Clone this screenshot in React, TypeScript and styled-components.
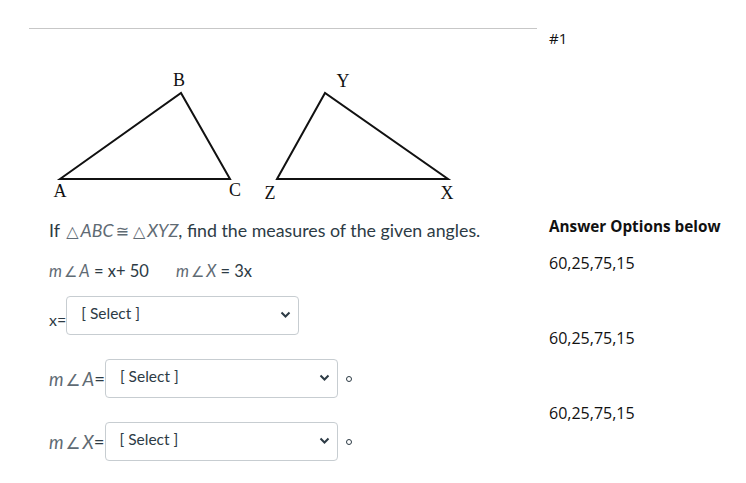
import styled, { createGlobalStyle } from "styled-components";

const Global = createGlobalStyle`
  html, body { margin: 0; padding: 0; background: #fff; }
  body { font-family: Lato, "Noto Sans", sans-serif; color: #2d3b45; }
`;

const Page = styled.div`
  display: flex;
  width: 746px;
  height: 483px;
  overflow: hidden;
`;

const Main = styled.div`
  width: 508px;
  margin-left: 29px;
  padding-top: 28px;
  display: flex;
  flex-direction: column;
`;

const Rule = styled.div`
  height: 0;
  border-top: 1px solid #c7c7c7;
`;

const Figure = styled.svg`
  display: block;
  width: 440px;
  height: 176px;
  font-family: "Liberation Serif", "DejaVu Serif", serif;
`;

const Question = styled.p`
  margin: 13px 0 0 20px;
  font-size: 17.8px;
  line-height: 24px;
  color: #2d3b45;
  white-space: nowrap;
`;

const Givens = styled.p`
  margin: 15px 0 0 20px;
  font-size: 16.5px;
  line-height: 24px;
  color: #2d3b45;
  display: flex;
  gap: 27px;
`;

const Var = styled.span`
  font-style: italic;
  color: #5f6b74;
`;

const Sym = styled.span`
  font-family: "DejaVu Sans", sans-serif;
  font-size: 0.9em;
  color: #5f6b74;
  margin: 0 2px;
`;

const Rows = styled.div`
  margin: 12px 0 0 20px;
  display: flex;
  flex-direction: column;
  gap: 24px;
`;

const Row = styled.div`
  display: flex;
  align-items: center;
`;

const Label = styled.span<{ $drop?: number }>`
  font-size: 16px;
  color: #2d3b45;
  padding-top: ${(p) => (p.$drop ?? 0) * 2}px;
  white-space: nowrap;
`;

const MathLabel = styled(Label)`
  font-size: 18.5px;
`;

const SelectWrap = styled.div`
  position: relative;
  width: 233px;
  height: 39px;
`;

const Select = styled.select`
  appearance: none;
  width: 100%;
  height: 100%;
  box-sizing: border-box;
  border: 1px solid #c7cdd1;
  border-radius: 4px;
  background: #fff;
  padding: 0 30px 6px 14px;
  font-family: Lato, sans-serif;
  font-size: 15.5px;
  color: #2d3b45;
`;

const Chevron = styled.svg`
  position: absolute;
  right: 8px;
  top: 15px;
  width: 11px;
  height: 8px;
  pointer-events: none;
`;

const Degree = styled.span`
  margin-left: 8px;
  width: 4px;
  height: 4px;
  border: 1px solid #2d3b45;
  border-radius: 50%;
`;

const Side = styled.div`
  margin-left: 12px;
  display: flex;
  flex-direction: column;
  font-family: "Open Sans", "Liberation Sans", sans-serif;
  color: #111;
  font-size: 16px;
`;

const Number = styled.div`
  margin-top: 28px;
  line-height: 20px;
  font-size: 15px;
`;

const Heading = styled.div`
  margin-top: 168px;
  font-weight: 700;
  line-height: 20px;
  font-size: 15.3px;
`;

const Option = styled.div<{ $gap: number }>`
  margin-top: ${(p) => p.$gap}px;
  line-height: 20px;
`;

function Triangles() {
  return (
    <Figure viewBox="0 0 440 176">
      <g fill="none" stroke="#111" strokeWidth={2} strokeLinejoin="miter">
        <polygon points="31,150 152,64 201,150" />
        <polygon points="248,150 296,64 419,150" />
      </g>
      <g fontSize={18} fill="#111" textAnchor="middle">
        <text x={150} y={57}>B</text>
        <text x={31} y={168}>A</text>
        <text x={206} y={167}>C</text>
        <text x={241} y={170}>Z</text>
        <text x={314} y={58}>Y</text>
        <text x={418} y={170}>X</text>
      </g>
    </Figure>
  );
}

function Dropdown() {
  return (
    <SelectWrap>
      <Select defaultValue="">
        <option value="">[ Select ]</option>
        <option>60</option>
        <option>25</option>
        <option>75</option>
        <option>15</option>
      </Select>
      <Chevron viewBox="0 0 11 8">
        <path d="M1.5 1.5 L5.5 5.5 L9.5 1.5" fill="none" stroke="#2d3b45" strokeWidth={2} />
      </Chevron>
    </SelectWrap>
  );
}

export default function App() {
  return (
    <Page>
      <Global />
      <Main>
        <Rule />
        <Triangles />
        <Question>
          If <Sym>△</Sym><Var>ABC</Var><Sym>≅</Sym><Sym>△</Sym><Var>XYZ</Var>, find the measures of the given angles.
        </Question>
        <Givens>
          <span>
            <Var>m</Var><Sym>∠</Sym><Var>A</Var> = x+ 50
          </span>
          <span>
            <Var>m</Var><Sym>∠</Sym><Var>X</Var> = 3x
          </span>
        </Givens>
        <Rows>
          <Row>
            <Label $drop={4}>x=</Label>
            <Dropdown />
          </Row>
          <Row>
            <MathLabel>
              <Var>m</Var><Sym>∠</Sym><Var>A</Var>=
            </MathLabel>
            <Dropdown />
            <Degree />
          </Row>
          <Row>
            <MathLabel>
              <Var>m</Var><Sym>∠</Sym><Var>X</Var>=
            </MathLabel>
            <Dropdown />
            <Degree />
          </Row>
        </Rows>
      </Main>
      <Side>
        <Number>#1</Number>
        <Heading>Answer Options below</Heading>
        <Option $gap={17}>60,25,75,15</Option>
        <Option $gap={55}>60,25,75,15</Option>
        <Option $gap={55}>60,25,75,15</Option>
      </Side>
    </Page>
  );
}
